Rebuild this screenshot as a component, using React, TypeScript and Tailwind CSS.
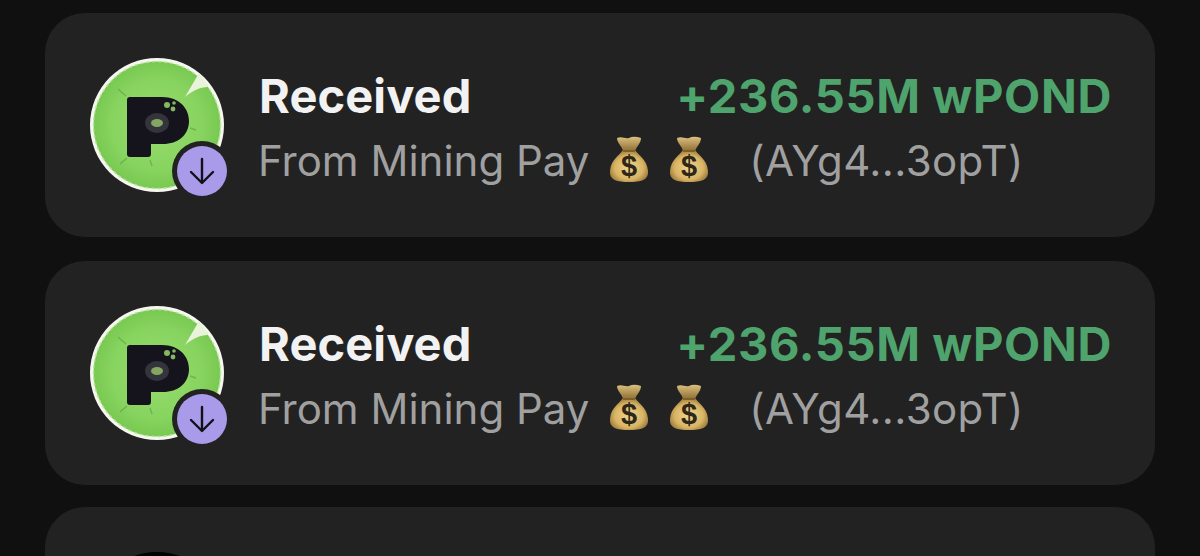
function MoneyBag() {
  return (
    <svg viewBox="0 0 40 48" className="w-[40px] h-[48px] shrink-0 -mt-[4px]">
      <defs>
        <radialGradient id="bagBody" cx="50%" cy="55%" r="60%">
          <stop offset="0%" stopColor="#f0d58e" />
          <stop offset="62%" stopColor="#d9b565" />
          <stop offset="100%" stopColor="#8c6c2f" />
        </radialGradient>
        <linearGradient id="bagTop" x1="0" y1="0" x2="0" y2="1">
          <stop offset="0%" stopColor="#dcc07e" />
          <stop offset="100%" stopColor="#8f6f35" />
        </linearGradient>
      </defs>
      <path d="M8 3 C13 1 16 4 20 3 C24 1 28 2 32 3 C32 8 28 11 26 16 L14 16 C13 11 8 8 8 3 Z" fill="url(#bagTop)" />
      <path d="M14 15 C11 20 2 24 1 36 C0 45 8 47 20 47 C32 47 40 45 39 36 C38 24 29 20 26 15 Z" fill="url(#bagBody)" />
      <path d="M14 16 L26 16" stroke="#7d5f2a" strokeWidth="2" />
      <text x="20" y="41" textAnchor="middle" fontSize="29" fontWeight="700" fill="#2f2718" fontFamily="Liberation Sans, sans-serif">$</text>
    </svg>
  );
}

function Avatar() {
  return (
    <div className="relative w-[134px] h-[134px] shrink-0">
      <svg viewBox="0 0 134 134" className="w-full h-full">
        <defs>
          <radialGradient id="coin" cx="50%" cy="50%" r="50%">
            <stop offset="0%" stopColor="#97dc6f" />
            <stop offset="70%" stopColor="#88d460" />
            <stop offset="100%" stopColor="#78c952" />
          </radialGradient>
        </defs>
        <circle cx="67" cy="67" r="67" fill="#f6f8f0" />
        <circle cx="67" cy="67" r="63.5" fill="url(#coin)" stroke="#b8e39c" strokeWidth="1.5" strokeDasharray="3 3" />
        <path d="M109 15 L95 39 C102 33 110 29 118 29 C116 24 113 19 109 15 Z" fill="#e8f3da" />
        <path d="M36 38 L28 31 M60 102 L62 108 M37 100 L30 106 M100 70 L106 72" stroke="#5fa044" strokeWidth="1.5" opacity="0.6" />
        <path d="M37 42 C37 40 38 39 40 39 L72 39 C90 39 99 51 99 63 C99 77 88 86 73 86 L61 86 L61 96 C61 98 60 99 58 99 L40 99 C38 99 37 98 37 96 Z" fill="#15141d" />
        <ellipse cx="67" cy="65" rx="12" ry="10" fill="#33343c" />
        <ellipse cx="67" cy="65" rx="6" ry="4" fill="#84a662" />
        <circle cx="77" cy="47" r="3" fill="#86b85f" />
        <circle cx="83" cy="51" r="2.4" fill="#86b85f" />
        <circle cx="84" cy="45" r="1.8" fill="#86b85f" />
      </svg>
      <div className="absolute left-[82px] top-[83px] w-[60px] h-[60px] rounded-full bg-[#222222] flex items-center justify-center">
        <div className="w-[50px] h-[50px] rounded-full bg-[#a99be9] flex items-center justify-center">
          <svg viewBox="0 0 28 28" fill="none" stroke="#111118" strokeWidth="2.4" strokeLinecap="round" strokeLinejoin="round" className="w-[28px] h-[28px]">
            <path d="M14 2 V25" />
            <path d="M3 15 L14 26 L25 15" />
          </svg>
        </div>
      </div>
    </div>
  );
}

function TxCard() {
  return (
    <div className="h-[224px] rounded-[40px] bg-[#222222] pl-[45px] pr-[43px] flex items-center">
      <Avatar />
      <div className="flex-1 ml-[35px] mt-[7px]">
        <div className="flex items-center justify-between h-[64px]">
          <span className="text-[47px] font-bold text-[#f2f2f2] tracking-[0.1px]">Received</span>
          <span className="text-[47px] font-bold text-[#4fa36c] tracking-[0.65px]">+236.55M wPOND</span>
        </div>
        <div className="flex items-center h-[64px] text-[42px] text-[#a0a0a0] -ml-px">
          <span>From Mining Pay</span>
          <span className="ml-[20px]"><MoneyBag /></span>
          <span className="ml-[20px]"><MoneyBag /></span>
          <span className="ml-[40px] tracking-[0.4px]">(AYg4...3opT)</span>
        </div>
      </div>
    </div>
  );
}

export default function App() {
  return (
    <div className="w-[1200px] h-[556px] overflow-hidden bg-[#101010] px-[45px] pt-[13px] font-['Inter',sans-serif]">
      <div className="flex flex-col gap-6">
        <TxCard />
        <TxCard />
      </div>
      <div className="mt-[22px] h-[224px] rounded-[40px] bg-[#222222] pl-[45px] pt-[45px]">
        <div className="w-[134px] h-[134px] rounded-full bg-black" />
      </div>
    </div>
  );
}
